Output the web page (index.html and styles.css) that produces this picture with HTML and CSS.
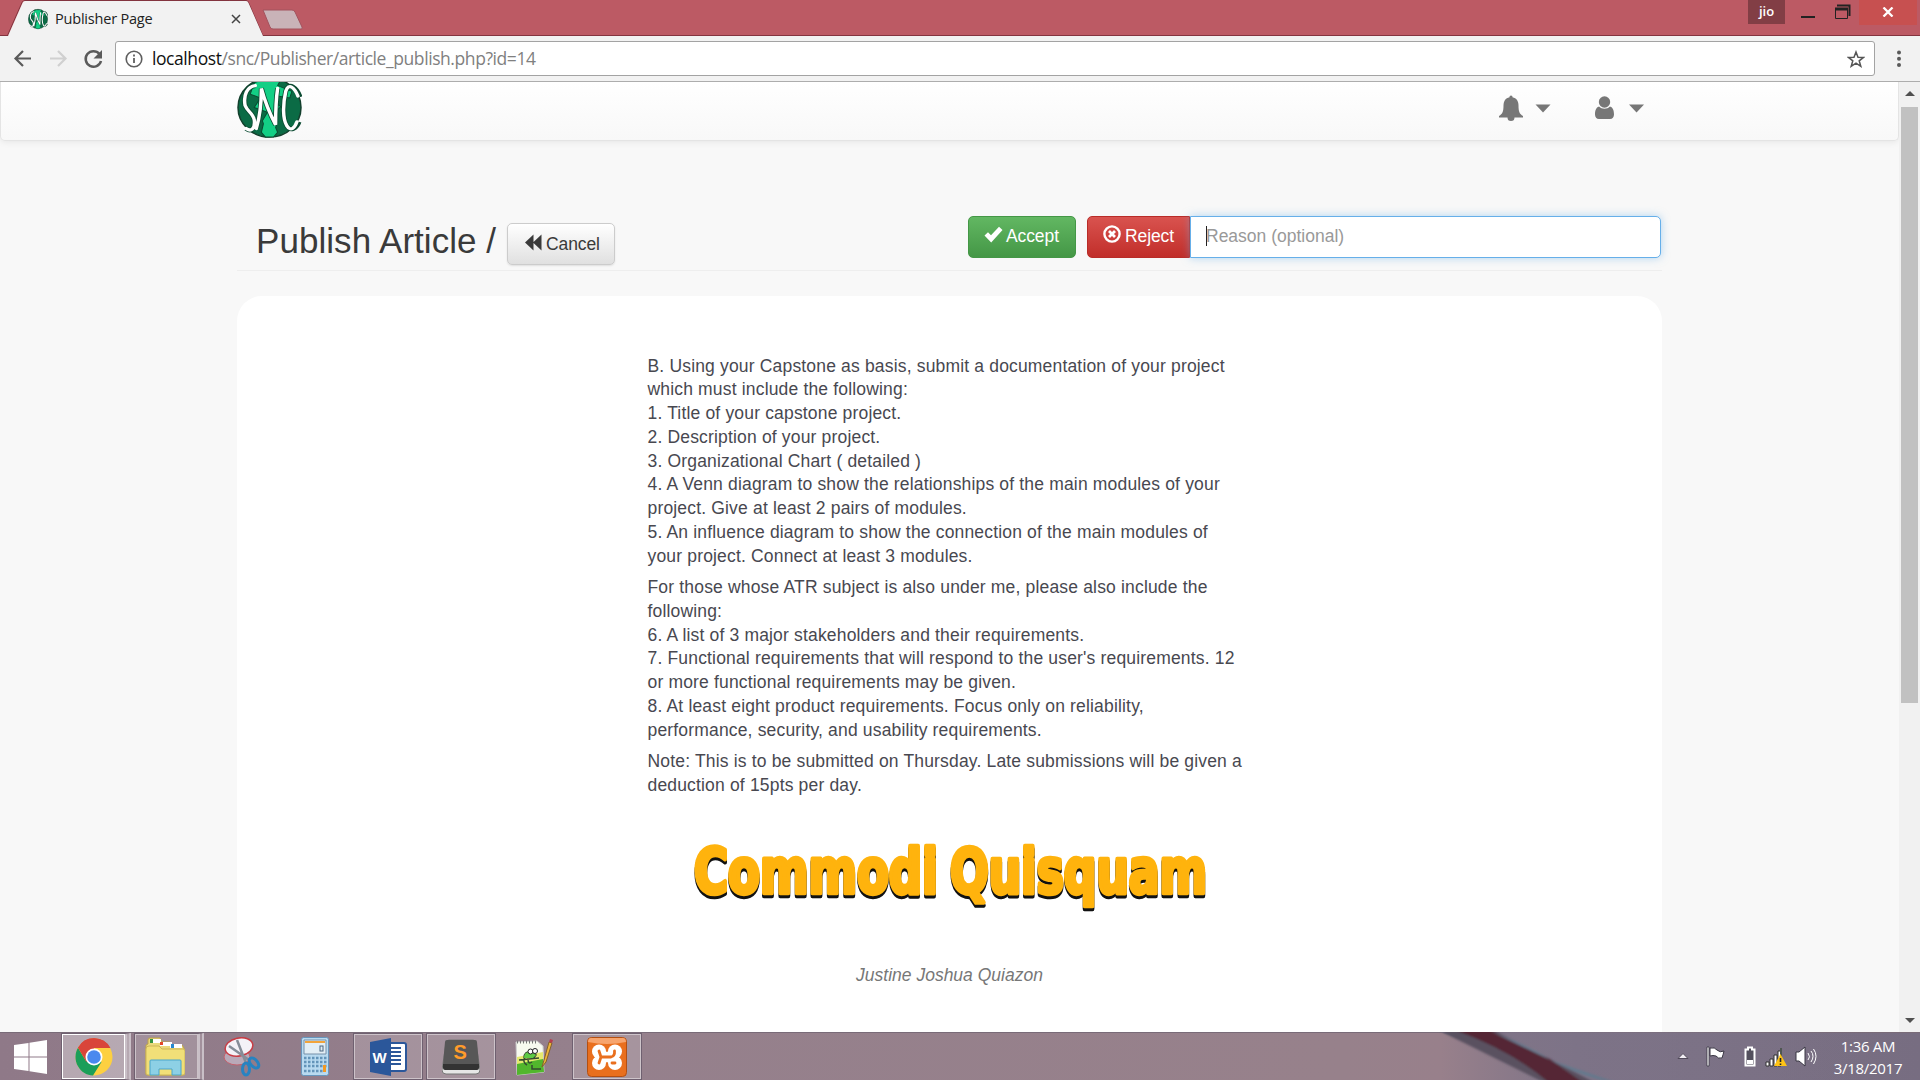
FILE: index.html
```html
<!DOCTYPE html>
<html lang="en">
<head>
<meta charset="utf-8">
<title>Publisher Page</title>
<link rel="stylesheet" href="styles.css">
</head>
<body>
<svg class="defs" width="0" height="0">
  <defs>
    <symbol id="snc" viewBox="0 0 64 64">
      <circle cx="32" cy="32" r="31" fill="#0b6b45" stroke="#123f2c" stroke-width="1.5"/>
      <path fill="#13cf85" stroke="#0a4a30" stroke-width="1" d="M21 3h22l-3 6 14 6-2 7-12-2-2 7 5 4-6 7 3 9-2 6 2 5-4 5h-8l-4-5 2-9-1-3 5-9-13-5 6-10-10-4 4-12 8-3z"/>
      <path fill="none" stroke="#0b4a31" stroke-width="5" d="M18 9C10 10 6 19 8 30c2 6 8 8 9 15 1 9-3 13-8 9M19 54c2-7 5-24 5-42 3 12 8 26 14 38 0-13 0-24 2-38M62 21c-3-9-11-17-14-6-3 14-3 29 1 36 4 7 10 2 12-4"/>
      <path fill="none" stroke="#fff" stroke-width="3.400" stroke-linecap="round" d="M18 9C10 10 6 19 8 30c2 6 8 8 9 15 1 9-3 13-8 9M19 54c2-7 5-24 5-42 3 12 8 26 14 38 0-13 0-24 2-38M60 20c-3-8-9-15-12-5-3 14-3 29 1 36 4 7 8 2 10-4"/>
    </symbol>
  </defs>
</svg>

<div class="screen">
  <header class="tabstrip">
    <svg class="tab-shape" width="300" height="36" viewBox="0 0 300 36">
      <path d="M0 35.5h7.500L22 2.500Q23 .5 25 .5H229Q231 .5 232 2.500L246 35.500H300" fill="none" stroke="#83343f"/>
      <path d="M8 36 22.500 3q.7-2 2.500-2H230q1.800 0 2.500 2L246 36z" fill="#f2f2f2"/>
      <path d="M230 .5h16q1.800 0 2.500 2L263 36" fill="none" stroke="#83343f"/>
      <path d="M229 1h17q1.800 0 2.500 2L263 36h-34z" fill="#f2f2f2"/>
      <path d="M263 10h29q2 0 3 2l7 15q1 2-1 2H273q-2 0-3-2z" fill="#c9b3b8" stroke="#a3525d"/>
    </svg>
    <div class="tab">
      <svg class="favicon" width="20" height="22"><use href="#snc"/></svg>
      <span class="tab-title">Publisher Page</span>
      <svg class="tab-close" width="10" height="10" viewBox="0 0 10 10"><path d="m1 1 8 8M9 1 1 9" stroke="#444" stroke-width="1.500"/></svg>
    </div>
    <div class="window-buttons">
      <span class="profile">jio</span>
      <span class="minimize"></span>
      <svg class="restore" width="16" height="16" viewBox="0 0 16 16"><path d="M2 1.500h12.500V12" fill="none" stroke="#222" stroke-width="2"/><path d="M.5 4.500h12v10H.5z" fill="none" stroke="#222"/><path d="M0 3.500h13v3H0z" fill="#222"/></svg>
      <span class="close"><svg width="12" height="10" viewBox="0 0 12 10"><path d="m1.500.5 9 9M10.500.5l-9 9" stroke="#fff" stroke-width="2.300"/></svg></span>
    </div>
  </header>

  <div class="toolbar">
    <svg class="nav-icons" width="110" height="44" viewBox="0 0 110 44" fill="none" stroke-width="2.200">
      <path d="M31 22.500H16M23 15l-7.500 7.500L23 30" stroke="#5a5a5a"/>
      <path d="M50 22.500h15M58 15l7.500 7.500L58 30" stroke="#d0d0d0"/>
      <path d="M99.500 18A7.800 7.800 0 1 0 101 25" stroke="#5a5a5a" stroke-width="2.500"/>
      <path d="M102 14v8.500h-8.500z" fill="#5a5a5a"/>
    </svg>
    <div class="omnibox">
      <svg class="info" width="18" height="18" viewBox="0 0 18 18" fill="none" stroke="#5f5f5f"><circle cx="9" cy="9" r="7.800" stroke-width="1.600"/><path d="M9 8v5M9 4.500v2" stroke-width="1.800"/></svg>
      <span class="url"><b>localhost</b>/snc/Publisher/article_publish.php?id=14</span>
      <svg class="star" width="18" height="18" viewBox="0 0 18 18"><path d="m9 2 2 5.200 5.500.2-4.300 3.400 1.600 5.500L9 13.200l-4.800 3.100 1.600-5.500L1.500 7.400 7 7.200z" fill="none" stroke="#555" stroke-width="1.500"/></svg>
    </div>
    <svg class="menu" width="6" height="20" viewBox="0 0 6 20" fill="#5a5a5a"><circle cx="3" cy="3.500" r="2"/><circle cx="3" cy="9.700" r="2"/><circle cx="3" cy="16" r="2"/></svg>
  </div>

  <div class="viewport">
    <main class="page">
      <nav class="navbar">
        <svg class="brand" width="65" height="61" viewBox="0 0 64 64" preserveAspectRatio="none"><use href="#snc" width="64" height="64"/></svg>
        <svg class="nav-bell" width="52" height="28" viewBox="0 0 52 28" fill="#777"><path d="M12 1.500c1 0 1.500.8 1.500 1.700 4 .8 6 3.800 6 8.300 0 6 1 8.500 4.500 10.500v1.500h-8.500a3.500 3.500 0 0 1-7 0H0V22c3.500-2 4.500-4.500 4.500-10.500 0-4.500 2-7.500 6-8.300 0-.9.500-1.700 1.500-1.700z"/><path d="M36.500 10.500h15L44 18.500z"/></svg>
        <svg class="nav-user" width="50" height="28" viewBox="0 0 50 28" fill="#777"><circle cx="9.500" cy="8" r="5.700"/><path d="M4 12.500c3 3 8 3 11 0 3 1 4 4 4 8 0 2.500-1.500 4.500-4 4.500H4c-2.500 0-4-2-4-4.500 0-4 1-7 4-8z"/><path d="M34 10.500h15l-7.500 8z"/></svg>
      </nav>
      <div class="container">
        <div class="page-header">
          <h1 class="title">Publish Article /</h1>
          <button class="btn btn-default"><svg width="17" height="17" viewBox="0 0 17 17" fill="#3a3a3a"><path d="M0 8.500 8.500.5v16zM8 8.500 16.500.5v16z"/></svg><span>Cancel</span></button>
          <div class="actions">
            <button class="btn btn-success"><svg width="19" height="17" viewBox="0 0 18 17"><path d="m0 9.500 3.500-3.300 3 3L14.500.8 18 4 6.700 16.500z" fill="#fff"/></svg><span>Accept</span></button>
            <button class="btn btn-danger"><svg width="18" height="18" viewBox="0 0 18 18" fill="none" stroke="#fff"><circle cx="9" cy="9" r="7.600" stroke-width="2.400"/><path d="m6 6 6 6M12 6l-6 6" stroke-width="2.800"/></svg><span>Reject</span></button>
            <div class="reason"><i class="caret"></i><span>Reason (optional)</span></div>
          </div>
        </div>
        <article class="card">
          <div class="body">
            <p>B. Using your Capstone as basis, submit a documentation of your project<br>which must include the following:<br>1. Title of your capstone project.<br>2. Description of your project.<br>3. Organizational Chart ( detailed )<br>4. A Venn diagram to show the relationships of the main modules of your<br>project. Give at least 2 pairs of modules.<br>5. An influence diagram to show the connection of the main modules of<br>your project. Connect at least 3 modules.</p>
            <p>For those whose ATR subject is also under me, please also include the<br>following:<br>6. A list of 3 major stakeholders and their requirements.<br>7. Functional requirements that will respond to the user's requirements. 12<br>or more functional requirements may be given.<br>8. At least eight product requirements. Focus only on reliability,<br>performance, security, and usability requirements.</p>
            <p>Note: This is to be submitted on Thursday. Late submissions will be given a<br>deduction of 15pts per day.</p>
          </div>
          <svg class="headline" width="530" height="90" viewBox="0 0 530 90">
            <text x="6" y="63.500" textLength="244" lengthAdjust="spacingAndGlyphs">Commodi</text>
            <text x="262" y="63.500" textLength="257" lengthAdjust="spacingAndGlyphs">Quisquam</text>
          </svg>
          <p class="author">Justine Joshua Quiazon</p>
        </article>
      </div>
    </main>
    <aside class="scrollbar">
      <i class="arrow-up"></i><i class="thumb"></i><i class="arrow-down"></i>
    </aside>
  </div>

  <footer class="taskbar">
    <svg class="wallpaper" width="480" height="48" viewBox="0 0 480 48">
      <defs><linearGradient id="glass" x2="1"><stop stop-color="#7d7387"/><stop offset="1" stop-color="#7d7387" stop-opacity="0"/></linearGradient><filter id="soft"><feGaussianBlur stdDeviation="1"/></filter></defs>
      <path d="M40 0H480V48H185Q120 28 40 0z" fill="url(#glass)"/>
      <g filter="url(#soft)"><path d="M38-2h55l59 30 45 24h-50z" fill="#5a5161"/><path d="M55-2h36l57 28 40 28h-35Q115 20 55-2z" fill="#552735"/><path d="M88-2q50 20 62 30 30 10 70 24-34-6-62-20z" fill="#64798d"/></g>
    </svg>
    <div class="apps">
      <div class="app start"><svg width="34" height="34" viewBox="0 0 34 34" fill="#fff"><path d="M0 5 14.500 3v13.500H0zM15.500 2.800 33 0v16.500H15.500zM0 17.500h14.500V31L0 29zM15.500 17.500H33V34l-17.500-2.800z"/></svg></div>
      <div class="app open active stacked"><svg width="38" height="38" viewBox="0 0 38 38"><circle cx="19" cy="19" r="18.500" fill="#fdd041"/><path d="M19 19 3 9.700A18.500 18.500 0 0 1 35.300 10H19z" fill="#d9453a"/><path d="M3 9.700A18.500 18.500 0 0 0 18 37.500L26.500 24 19 19l-8 4z" fill="#1b9e59"/><path d="M3 9.700 11.500 24 19 10h16.300A18.500 18.500 0 0 0 3 9.700z" fill="#d9453a"/><circle cx="19" cy="19" r="8.500" fill="#fff"/><circle cx="19" cy="19" r="6.800" fill="#4a89ee"/></svg></div>
      <div class="app open stacked two"><svg width="40" height="40" viewBox="0 0 40 40"><path d="M3 3q0-2 2-2h10l2 4h8l1 3h11l2 3v26q0 1-1 1H2q-1 0-1-1V8l2-1z" fill="#ead97c" stroke="#bda34a"/><path d="M5 2h11v4H5zM15 5h12v4H15zM25 7h12v4H25z" fill="#fff"/><path d="M5 2h3v4H5z" fill="#32933e"/><path d="M15 5h3v3h-3z" fill="#e4472b"/><path d="M26 7h3v4h-3z" fill="#2789cf"/><path d="M1 12q0-3 3-3h10l3 3h21q2 0 2 2v22q0 2-2 2H3q-2 0-2-2z" fill="#f1df78" stroke="#cdb557"/><path d="M5 24q0-1 1-1h29q1 0 1 1v14h-9v-6H14v6H5z" fill="#8dd0e5" stroke="#4ba5cc"/></svg></div>
      <div class="app plain snip"><svg width="38" height="40" viewBox="0 0 38 40"><ellipse cx="14" cy="20" rx="13" ry="8" fill="#b9a9b8" stroke="#c3616d"/><ellipse cx="16" cy="10" rx="14" ry="9" fill="#f4f2f7" stroke="#c83d45" stroke-width="1.500" transform="rotate(-12 16 10)"/><path d="m6 9 20 14M14 3l9 23" stroke="#858c97" stroke-width="2.500"/><g fill="none" stroke="#2783c1" stroke-width="3"><ellipse cx="31" cy="26" rx="3.500" ry="6" transform="rotate(-42 31 26)"/><ellipse cx="23" cy="32" rx="3.500" ry="6"/></g></svg></div>
      <div class="app plain calc"><svg width="28" height="40" viewBox="0 0 28 40"><rect x=".5" y=".5" width="27" height="38" rx="2" fill="#b9daf0" stroke="#6796bd"/><path d="M3 3h22v14H3z" fill="#e3eef5" stroke="#7690a8"/><path d="M4 4h20v2H4z" fill="#f2a43a"/><rect x="19" y="9" width="3" height="5" fill="none" stroke="#4b6680"/><g stroke="#6394b9" stroke-width="2.500" stroke-dasharray="2.500 1.500"><path d="M3 21h23M3 25h23M3 29h23M3 34h19"/></g><path d="M22 28h3v7h-3z" fill="#f39a24"/></svg></div>
      <div class="app open word"><svg width="38" height="38" viewBox="0 0 38 38"><path d="M18 5h17q2 0 2 2v24q0 2-2 2H18z" fill="#fff" stroke="#2b579a" stroke-width="2"/><path d="M21 10h11M21 14h11M21 18h11M21 22h11M21 26h11" stroke="#2b579a" stroke-width="2"/><path d="M1 4 22 0v38L1 34z" fill="#2b579a"/><text x="3.500" y="25" class="w">W</text></svg></div>
      <div class="app open sublime"><svg width="38" height="36" viewBox="0 0 38 36"><path d="M4 4Q4 1 7 1h24q3 0 3 3l4 27q0 4-4 4H4q-4 0-4-4z" fill="#e6e6e6" stroke="#777"/><path d="M5 1h28q2 0 2 2l2 22H1L3 3q0-2 2-2z" fill="#575757"/><path d="M1 25h36v4q0 2-2 2H3q-2 0-2-2z" fill="#333"/><text x="11.500" y="20" class="s">S</text></svg></div>
      <div class="app plain npp"><svg width="38" height="38" viewBox="0 0 38 38"><path d="m1 4 21-1 6 5 1 26-27 3z" fill="#f7faef" stroke="#ccc"/><path d="m2 24 26-4 1 14-27 3z" fill="#52b62d"/><path d="m2 19 26-5v7L2 26z" fill="#e5ea70"/><path d="M2 4h20" stroke="#777" stroke-width="3" stroke-dasharray="1 2"/><path d="M9 20q0-7 7-6l5 3-3 4h-5q0 6 4 3M10 19q-3 5 2 8M4 22l20-2M17 27v4h9" fill="none" stroke="#354b31" stroke-width="1.500"/><path d="M9 20q0-7 7-6l5 3-3 3h-6z" fill="#5dca45"/><circle cx="15.500" cy="13.500" r="2.500" fill="#fff" stroke="#222"/><circle cx="20" cy="13" r="2.500" fill="#fff" stroke="#222"/><path d="m27 29 2-7L34 4l3 1-6 19z" fill="#edb43b" stroke="#83612a"/><path d="m34 4 1-3 3 1-1 3z" fill="#b63e4d"/></svg></div>
      <div class="app open xampp"><svg width="40" height="40" viewBox="0 0 40 40"><rect x=".5" y=".5" width="39" height="39" rx="4" fill="#e96f1e" stroke="#b34f12"/><path d="M4 1h32q3 0 3 4Q20 9 1 5q0-4 3-4z" fill="#f7a46d"/><g fill="#fff"><circle cx="12" cy="14.500" r="7"/><circle cx="12" cy="26" r="7"/><circle cx="28" cy="14.500" r="7"/><circle cx="28" cy="26" r="7"/><path d="M13 11 20 15l7-4 5 9-5 9-7-4-7 4-5-9z"/></g><path d="m12 14 2 6-2 6M14 20h10q4-1 3.500-6M25 26h3" fill="none" stroke="#e96f1e" stroke-width="2.800" stroke-linecap="round"/></svg></div>
    </div>
    <div class="tray">
      <svg width="150" height="28" viewBox="0 0 150 28">
        <path d="m3 15.500 5-5 5 5z" fill="#f2eef4" stroke="#514a5a"/>
        <path d="M32 4h2v19h-2z" fill="#fff" stroke="#383542" stroke-width=".8"/><path d="M35 5q5-1 7 2 3 3 7 1-1 4-2 7-4 1-6-2-3-1-6 0z" fill="#fff" stroke="#383542"/>
        <path d="M70.500 6.500h2.500v-2h4v2h2.500v16h-9z" fill="#53505d" stroke="#fff" stroke-width="2"/><path d="M72 17h6v4h-6z" fill="#fff"/>
        <path d="M91 19h3v4h-3zM95 16h3v7h-3zM99 12h3v11h-3zM103 8h3v15h-3z" fill="#fff" stroke="#333"/><path d="M105 5h2v8h-2z" fill="#4f5751"/><path d="m105.500 11 6.500 12h-13z" fill="#ffc314"/><path d="M105.500 15v4M105.500 20.500v1.500" stroke="#222" stroke-width="1.600"/>
        <path d="M121 9h3l6-5v19l-6-5h-3z" fill="#fff" stroke="#393743"/><path d="M133 10q3 4 0 7M136 8q4 5 0 11M138.500 6q5 7 0 15" fill="none" stroke="#fff"/>
      </svg>
      <div class="clock"><span>1:36 AM</span><span>3/18/2017</span></div>
    </div>
  </footer>
</div>
</body>
</html>
```
FILE: styles.css
```css
* { box-sizing: border-box; }
body { margin: 0; overflow: hidden; font-family: "Liberation Sans", Arial, sans-serif; }
svg { display: block; flex: none; }
.defs { position: absolute; }
.screen { width: 1920px; height: 1080px; display: flex; flex-direction: column; overflow: hidden; }

.tabstrip { position: relative; flex: none; display: flex; justify-content: space-between; height: 36px; background: #bc5a64; border-bottom: 1px solid #83343f; font-family: "Open Sans", sans-serif; }
.tab-shape { position: absolute; left: 0; top: 0; overflow: visible; }
.tab { position: relative; display: flex; align-items: center; width: 241px; height: 37px; padding-left: 28px; color: #222; }
.tab-title { flex: 1; margin-left: 7px; font-size: 14.5px; letter-spacing: -0.2px; white-space: nowrap; }
.window-buttons { display: flex; align-items: flex-start; padding-right: 3px; }
.profile { width: 37px; height: 24px; margin-right: 16px; background: #823e45; color: #fff; font-size: 13px; font-weight: 600; line-height: 23px; text-align: center; }
.minimize { width: 14px; height: 2px; margin: 16px 20px 0 0; background: #222; }
.restore { margin: 4px 8px 0 0; }
.close { display: flex; justify-content: center; width: 58px; height: 25px; padding-top: 7px; background: #c75050; }

.toolbar { flex: none; display: flex; align-items: center; height: 46px; background: #f2f2f2; border-bottom: 1px solid #adadad; }
.nav-icons { margin: -1px 5px 0 0; }
.omnibox { display: flex; align-items: center; width: 1760px; height: 35px; padding: 0 9px; background: #fff; border: 1px solid #a3a3a3; border-radius: 3px; }
.url { flex: 1; margin: -2px 0 0 9px; color: #808080; font: 17.5px "Open Sans", sans-serif; letter-spacing: -0.42px; }
.url b { color: #111; font-weight: 400; }
.menu { margin-left: 21px; }

.viewport { flex: 1; display: flex; min-height: 0; }
.page { flex: 1; background: #f8f8f8; overflow: hidden; }
.navbar { display: flex; height: 59px; padding-left: 236px; background: linear-gradient(#fff, #f8f8f8); border: 1px solid #e4e4e4; border-top: 0; border-radius: 0 0 5px 5px; box-shadow: 0 1px 7px rgba(0, 0, 0, .08); }
.brand { margin-top: -5px; }
.nav-bell { margin: 12px 0 0 1197px; }
.nav-user { margin: 12px 0 0 44px; }
.container { width: 1425px; margin-left: 237px; }
.page-header { display: flex; align-items: flex-start; height: 130px; padding: 75px 1px 0 19px; border-bottom: 1px solid #eee; }
.title { width: 251px; margin: 0; color: #3a3a3a; font-size: 35px; font-weight: 400; line-height: 50px; letter-spacing: 0.05px; white-space: nowrap; }
.btn { display: flex; align-items: center; gap: 4px; height: 42px; padding: 0 0 0 15px; border: 1px solid; border-radius: 5px; color: #fff; font: 17.5px "Liberation Sans", Arial, sans-serif; letter-spacing: -0.1px; }
.btn-default { width: 108px; margin-top: 7px; padding-left: 17px; color: #3a3a3a; background: linear-gradient(#fff, #e0e0e0); border-color: #ccc; box-shadow: 0 1px 2px rgba(0, 0, 0, .1); }
.btn-default svg { margin-top: -4px; }
.actions { display: flex; margin-left: auto; }
.btn-success { width: 108px; margin-right: 11px; gap: 3px; background: linear-gradient(#62b762, #449746); border-color: #449746; }
.btn-danger { width: 103px; padding-left: 15px; gap: 4px; background: linear-gradient(#d9534f, #c12e2a); border-color: #b92c28; border-radius: 5px 0 0 5px; }
.btn-success svg, .btn-danger svg { margin-top: -6px; }
.btn-success span, .btn-danger span { margin-top: -2px; }
.reason { display: flex; align-items: center; width: 471px; height: 42px; padding: 0 0 2px 15px; background: #fff; border: 1px solid #66afe9; border-radius: 0 5px 5px 0; box-shadow: 0 0 8px rgba(102, 175, 233, .5); color: #999; font-size: 17.5px; }
.caret { width: 1px; height: 20px; margin-right: -1px; background: #222; }
.card { display: flex; flex-direction: column; height: 760px; margin-top: 25px; padding: 58.5px 0 0 410.5px; background: #fff; border-radius: 25px; }
.body { color: #484850; font-size: 17.5px; line-height: 23.78px; letter-spacing: 0.17px; white-space: nowrap; }
.body p { margin: 0 0 7.5px; }
.headline { margin: 24px 0 0 40px; overflow: visible; }
.headline text { font-family: "DejaVu Sans Condensed", "DejaVu Sans", sans-serif; font-size: 63px; font-weight: 700; fill: #ffb30d; stroke: #ffb30d; stroke-width: 4.5px; stroke-linejoin: round; filter: drop-shadow(0 3px 0 #111); }
.author { width: 604px; margin: 46px 0 0; color: #777; font-size: 17.5px; font-style: italic; text-align: center; }

.scrollbar { flex: none; display: flex; flex-direction: column; align-items: center; width: 21px; background: #f1f1f1; }
.arrow-up { margin: 9px 0 0; border: 5px solid transparent; border-top: 0; border-bottom-color: #505050; }
.thumb { width: 17px; height: 596px; margin-top: 11px; background: #c1c1c1; }
.arrow-down { margin: auto 0 9px; border: 5px solid transparent; border-bottom: 0; border-top-color: #505050; }

.taskbar { position: relative; flex: none; display: flex; justify-content: space-between; height: 48px; background: linear-gradient(90deg, #8f7988, #95808c 30%, #97818b 70%, #98808b 75%, #7d7387 82%, #776d81); border-top: 1px solid #796b78; }
.wallpaper { position: absolute; left: 1400px; top: -1px; }
.apps { position: relative; display: flex; }
.app { flex: none; display: flex; align-items: center; justify-content: center; height: 47px; }
.start { width: 61px; }
.open { width: 70px; background: rgba(255, 255, 255, .16); border: 1px solid #6f6070; box-shadow: inset 0 0 0 1px rgba(255, 255, 255, .45); }
.active { background: rgba(255, 255, 255, .35); box-shadow: inset 0 0 0 1px #fff; }
.stacked { border-right: 6px double #c9bfc7; }
.two { margin-left: 3px; }
.two svg { margin-left: -4px; }
.snip { width: 75px; }
.calc { width: 72px; }
.word { margin-left: 2px; }
.sublime { margin-left: 3px; }
.npp { width: 76px; }
.w { fill: #fff; font-size: 15px; font-weight: 700; }
.s { fill: #ff9c2a; font-size: 20px; font-weight: 700; }
.tray { position: relative; display: flex; align-items: flex-start; padding: 10px 13px 0 0; }
.clock { display: flex; flex-direction: column; align-items: center; width: 78px; margin: -8px 0 0 4px; color: #fff; font: 15px/22px "Open Sans", sans-serif; letter-spacing: -0.3px; white-space: nowrap; }
```
